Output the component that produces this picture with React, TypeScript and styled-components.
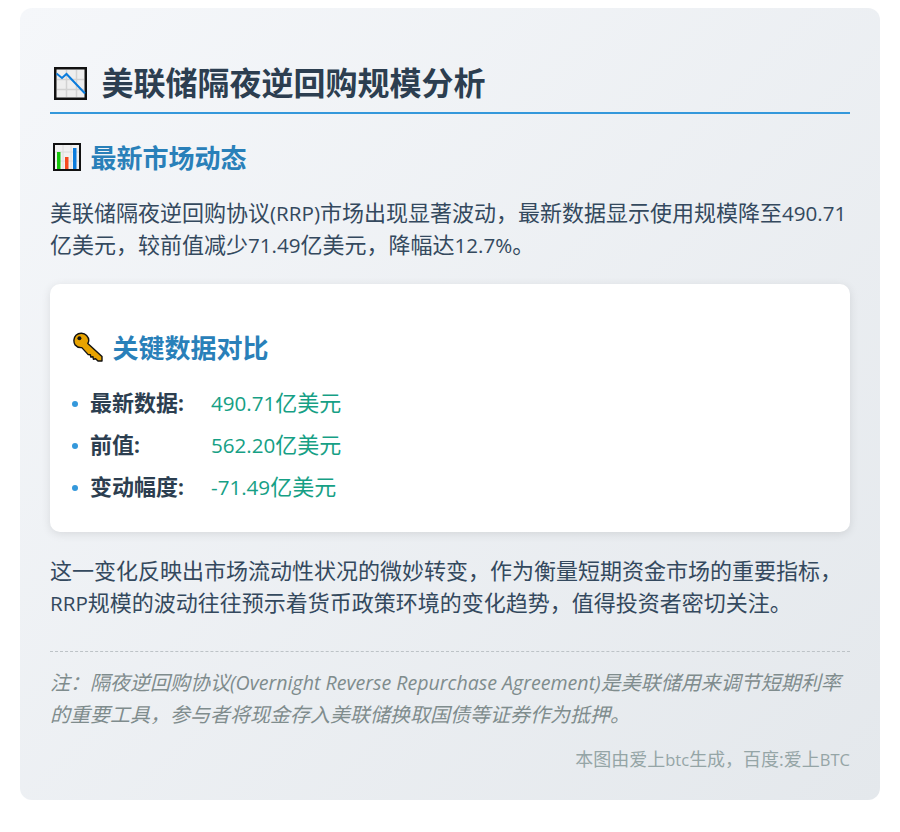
import React from "react";
import styled, { createGlobalStyle } from "styled-components";

const Global = createGlobalStyle`
  html, body { margin: 0; padding: 0; background: #fff; }
  body { font-family: "Open Sans", "Noto Sans CJK SC", sans-serif; }
`;
const Page = styled.div`
  width: 900px; height: 832px; box-sizing: border-box; padding: 8px 20px 0;
`;
const Card = styled.main`
  height: 792px; box-sizing: border-box; padding: 50px 30px 0;
  border-radius: 12px;
  background: linear-gradient(135deg, #f5f7fa 0%, #e4e8ec 100%);
`;
const Title = styled.h1`
  margin: 0; display: flex; align-items: center; gap: 14.6px;
  padding: 0 0 4px 4px; box-sizing: border-box; height: 56px;
  border-bottom: 2px solid #3498db;
  font-size: 32px; font-weight: 700; line-height: 44px; color: #2c3e50;
`;
const Section = styled.h2`
  margin: 25px 0 0 3px; display: flex; align-items: center; gap: 9.6px; height: 36px;
  font-size: 26px; font-weight: 700; color: #2980b9;
`;
const Para = styled.p<{ $top: number }>`
  margin: ${(p) => p.$top}px 0 0;
  font-size: 22px; line-height: 32px; color: #34495e;
`;
const Latin = styled.span<{ $size?: number }>`
  font-size: ${(p) => p.$size ?? 20.6}px;
  line-height: 1;
`;
const Panel = styled.section`
  margin-top: 24px; height: 248px; box-sizing: border-box; padding: 45px 22px 0;
  background: #fff; border-radius: 10px;
  box-shadow: 0 2px 10px rgba(0, 0, 0, 0.1);
`;
const PanelTitle = styled.h3`
  margin: 0 0 0 1px; display: flex; align-items: center; gap: 9.6px; height: 36px;
  font-size: 26px; font-weight: 700; color: #2980b9;
`;
const List = styled.ul`
  list-style: none; margin: 15px 0 0; padding: 0;
`;
const Item = styled.li`
  display: flex; align-items: center; height: 42px; font-size: 22px;
  &::before {
    content: ""; width: 6px; height: 6px; border-radius: 50%;
    background: #3498db; margin: 6px 12px 0 0; flex: none;
  }
`;
const Label = styled.strong`
  width: 121px; flex: none; font-weight: 700; color: #2c3e50;
`;
const Value = styled.span`
  color: #16a085;
`;
const Divider = styled.hr`
  margin: 33px 0 0; border: 0; border-top: 1px dashed #bdc3c7;
`;
const Note = styled.p`
  margin: 15px 0 0; font-size: 20px; line-height: 32px; font-style: italic; color: #7f8c8d;
`;
const Credit = styled.div`
  margin-top: 12px; text-align: right; font-size: 18px; line-height: 32px; color: #95a5a6;
`;

const FallingChart = () => (
  <svg width="33" height="33" viewBox="0 0 33 33" aria-hidden="true">
    <rect x="1.25" y="1.25" width="30.5" height="30.5" fill="#eeeeee" stroke="#111" strokeWidth="2.5" />
    <path d="M3 12.5H30M3 22.5H30M12.5 3V30M22.5 3V30" stroke="#d2d2d2" strokeWidth="1.5" />
    <path d="M2.5 6.5L8 11L12.5 7L31 26.5" fill="none" stroke="#0a7bdc" strokeWidth="2" />
  </svg>
);
const BarChart = () => (
  <svg width="28" height="28" viewBox="0 0 28 28" aria-hidden="true">
    <rect x="1" y="1" width="26" height="26" fill="#f1f1f1" stroke="#111" strokeWidth="2" />
    <path d="M2 9H26M2 18H26M10 2V26M18 2V26" stroke="#dcdcdc" strokeWidth="1" />
    <rect x="4" y="9" width="3.5" height="17" fill="#16c60c" />
    <rect x="12" y="14" width="3.5" height="12" fill="#f7491f" />
    <rect x="20" y="5" width="3.5" height="21" fill="#0a7bdc" />
  </svg>
);
const KeyIcon = () => (
  <svg width="30" height="30" viewBox="0 0 30 30" aria-hidden="true">
    <path
      d="M3 3.2C6 0.4 11 0.6 13.6 3.4C15.8 5.8 16.2 9 14.8 11.4L29 24.6L29 29L25 29L22.6 26.8L20.4 27.2L20 24.8L17.8 25L17.4 22.8L15.2 22.6L8.8 15.6C6.4 15.8 3.8 15 2.2 13C0.2 10 0.6 5.6 3 3.2Z"
      fill="#e8a300" stroke="#111" strokeWidth="1.4" strokeLinejoin="round"
    />
    <circle cx="6.4" cy="6.2" r="2" fill="#111" />
  </svg>
);

export default function App() {
  return (
    <Page>
      <Global />
      <Card>
        <Title><FallingChart />美联储隔夜逆回购规模分析</Title>
        <Section><BarChart />最新市场动态</Section>
        <Para $top={21}>
          美联储隔夜逆回购协议<Latin>(RRP)</Latin>市场出现显著波动，最新数据显示使用规模降至<Latin>490.71</Latin>亿美元，较前值减少<Latin>71.49</Latin>亿美元，降幅达<Latin>12.7%</Latin>。
        </Para>
        <Panel>
          <PanelTitle><KeyIcon />关键数据对比</PanelTitle>
          <List>
            <Item><Label>最新数据<Latin>:</Latin></Label><Value><Latin>490.71</Latin>亿美元</Value></Item>
            <Item><Label>前值<Latin>:</Latin></Label><Value><Latin>562.20</Latin>亿美元</Value></Item>
            <Item><Label>变动幅度<Latin>:</Latin></Label><Value><Latin>-71.49</Latin>亿美元</Value></Item>
          </List>
        </Panel>
        <Para $top={22}>
          这一变化反映出市场流动性状况的微妙转变，作为衡量短期资金市场的重要指标，<Latin>RRP</Latin>规模的波动往往预示着货币政策环境的变化趋势，值得投资者密切关注。
        </Para>
        <Divider />
        <Note>
          注：隔夜逆回购协议<Latin $size={19.6}>(Overnight Reverse Repurchase Agreement)</Latin>是美联储用来调节短期利率<br />的重要工具，参与者将现金存入美联储换取国债等证券作为抵押。
        </Note>
        <Credit>本图由爱上<Latin $size={16.5}>btc</Latin>生成，百度:爱上<Latin $size={16.5}>BTC</Latin></Credit>
      </Card>
    </Page>
  );
}
